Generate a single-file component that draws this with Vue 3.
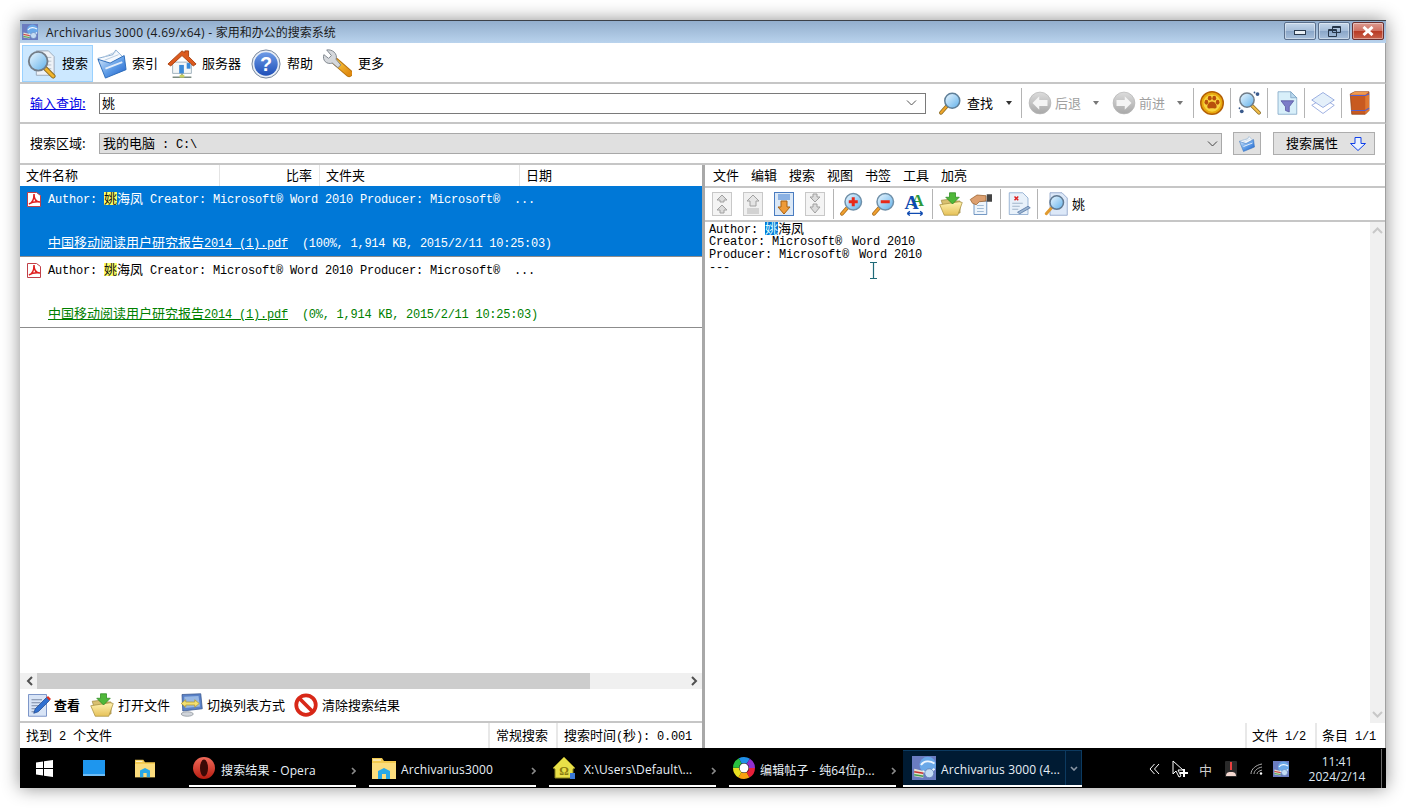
<template>
  <div class="page">
    <div class="window">
      <svg class="sprite" width="0" height="0">
        <defs>
          <linearGradient id="glass" x1="0" y1="0" x2="1" y2="1"><stop offset="0" stop-color="#eef8ff"/><stop offset="1" stop-color="#5fb0ea"/></linearGradient>
          <linearGradient id="orange" x1="0" y1="0" x2="1" y2="1"><stop offset="0" stop-color="#f8c840"/><stop offset="1" stop-color="#e08a10"/></linearGradient>
          <linearGradient id="blueF" x1="0" y1="0" x2="1" y2="1"><stop offset="0" stop-color="#e4f1fc"/><stop offset=".55" stop-color="#5b9ae6"/><stop offset="1" stop-color="#1c5cc8"/></linearGradient>
          <linearGradient id="helpB" x1="0" y1="0" x2="0" y2="1"><stop offset="0" stop-color="#6d9be6"/><stop offset="1" stop-color="#1f4fb8"/></linearGradient>
          <linearGradient id="gray" x1="0" y1="0" x2="0" y2="1"><stop offset="0" stop-color="#dcdcdc"/><stop offset="1" stop-color="#a8a8a8"/></linearGradient>
          <linearGradient id="yel" x1="0" y1="0" x2="0" y2="1"><stop offset="0" stop-color="#fff2b0"/><stop offset="1" stop-color="#e6c158"/></linearGradient>
          <linearGradient id="red" x1="0" y1="0" x2="0" y2="1"><stop offset="0" stop-color="#f06a5a"/><stop offset="1" stop-color="#b71c10"/></linearGradient>
        </defs>

        <symbol id="i-search" viewBox="0 0 32 32">
          <path d="M11 2h13l6 6v20H11z" fill="#eef2f7" stroke="#9aa7b8"/>
          <path d="M22 9h5M22 13h5M22 17h5M22 21h5" stroke="#b6c0cc"/>
          <path d="M20 20l9 9" stroke="#8a6a20" stroke-width="5" stroke-linecap="round"/>
          <path d="M21 21l8 8" stroke="#f2b52a" stroke-width="3" stroke-linecap="round"/>
          <circle cx="13" cy="13" r="10" fill="url(#glass)" stroke="#737d88" stroke-width="2"/>
        </symbol>
        <symbol id="i-folder" viewBox="0 0 32 32">
          <path d="M1 10l16-4 3-5 9 9-4 14-13 3z" fill="#f6f9fd" stroke="#7fa6cf"/>
          <path d="M6 9l14-6M8 12l15-6" stroke="#b8cce0"/>
          <path d="M1 11l8 20 22-9-2-15-15 8z" fill="url(#blueF)" stroke="#2a6ab8"/>
          <path d="M9 21l18-7" stroke="#fff" stroke-width="2" opacity=".8"/>
        </symbol>
        <symbol id="i-house" viewBox="0 0 32 32">
          <path d="M6 14h20v12H6z" fill="#f4f7f8" stroke="#9eb0bc"/>
          <path d="M1 16L16 2l3 2V2h4v6l8 8-3 2L16 7 4 18z" fill="#dc5a1e" stroke="#a8400f"/>
          <path d="M13 17h5v9h-5z" fill="#3b8ad8"/><path d="M21 15h4v6h-4z" fill="#3b8ad8"/>
          <path d="M16 26v4M6 30h20" stroke="#7a8a80" stroke-width="1.6"/>
          <rect x="13.500" y="27.500" width="5" height="3" fill="#c8d060"/>
        </symbol>
        <symbol id="i-help" viewBox="0 0 32 32">
          <circle cx="16" cy="16" r="15" fill="#e8eef6" stroke="#6f7f95"/>
          <circle cx="16" cy="16" r="12.500" fill="url(#helpB)"/>
        </symbol>
        <symbol id="i-wrench" viewBox="0 0 32 32">
          <path d="M14 13l15 13" stroke="#b87410" stroke-width="8" stroke-linecap="round"/>
          <path d="M15 14l14 12" stroke="url(#orange)" stroke-width="6" stroke-linecap="round"/>
          <path d="M5 1l5 6-3 3-5-4c-2 6 3 11 9 9l6 5 3-3-5-6c2-6-4-11-10-10z" fill="#d5d8dc" stroke="#7b828a"/>
        </symbol>
        <symbol id="i-find" viewBox="0 0 32 32">
          <path d="M12 20L4 29" stroke="#8a6a20" stroke-width="5" stroke-linecap="round"/>
          <path d="M12 20l-8 9" stroke="#eea52a" stroke-width="3" stroke-linecap="round"/>
          <circle cx="19" cy="13" r="10" fill="url(#glass)" stroke="#5f7f98" stroke-width="2"/>
        </symbol>
        <symbol id="i-back" viewBox="0 0 32 32">
          <circle cx="16" cy="16" r="14.500" fill="url(#gray)" stroke="#b5b5b5"/>
          <path d="M15 7l-9 9 9 9v-5h11v-8H15z" fill="#f4f4f4"/>
        </symbol>
        <symbol id="i-forward" viewBox="0 0 32 32">
          <circle cx="16" cy="16" r="14.500" fill="url(#gray)" stroke="#b5b5b5"/>
          <path d="M17 7l9 9-9 9v-5H6v-8h11z" fill="#f4f4f4"/>
        </symbol>
        <symbol id="i-paw" viewBox="0 0 32 32">
          <circle cx="16" cy="16" r="15" fill="#e8a90e" stroke="#b45f06" stroke-width="2"/>
          <circle cx="16" cy="16" r="11.500" fill="#f8d440"/>
          <g fill="#b8500c"><ellipse cx="8.500" cy="15" rx="2.500" ry="3.200"/><ellipse cx="13" cy="9.500" rx="2.600" ry="3.300"/><ellipse cx="19" cy="9.500" rx="2.600" ry="3.300"/><ellipse cx="23.500" cy="15" rx="2.500" ry="3.200"/><path d="M16 14c4 0 7 5 6 8-1 2-4 1-6 1s-5 1-6-1c-1-3 2-8 6-8z"/></g>
        </symbol>
        <symbol id="i-sfx" viewBox="0 0 32 32">
          <path d="M18 19l10 10" stroke="#8a6a20" stroke-width="5" stroke-linecap="round"/>
          <path d="M18 19l10 10" stroke="#f0bc4a" stroke-width="3" stroke-linecap="round"/>
          <circle cx="12" cy="12" r="9.500" fill="url(#glass)" stroke="#6f7c88" stroke-width="2"/>
          <g fill="#3a5a8c"><circle cx="26" cy="4" r="2.500"/><circle cx="22" cy="2" r="1.200"/><circle cx="5" cy="27" r="2.500"/><circle cx="2" cy="23" r="1.200"/></g>
        </symbol>
        <symbol id="i-filter" viewBox="0 0 32 32">
          <path d="M4 1h17l8 8v22H4z" fill="#d8effa" stroke="#7aa0c0"/>
          <path d="M21 1v8h8z" fill="#b9d8ee" stroke="#7aa0c0"/>
          <path d="M8 13h17l-6 8v7l-5-2v-5z" fill="#7c7cc8" stroke="#54549c"/>
        </symbol>
        <symbol id="i-layers" viewBox="0 0 32 32">
          <path d="M1 19l15-9 15 9-15 11z" fill="#fff" stroke="#8098d8"/>
          <path d="M1 12L16 2l15 10-15 10z" fill="#e4f0fa" stroke="#8098d8"/>
        </symbol>
        <symbol id="i-book" viewBox="0 0 32 32">
          <path d="M3 4l6-3h19v25l-5 5H5z" fill="#c85a20" stroke="#8c4218"/>
          <path d="M23 5h5v21l-5 5z" fill="#e07830"/>
          <path d="M3 6h20l5-2M4 26h19l5-3" stroke="#5860c8" stroke-width="1.600" fill="none"/>
          <path d="M9 1h19l-5 4H3z" fill="#f09a50"/>
        </symbol>
        <symbol id="i-pdf" viewBox="0 0 14 16">
          <path d="M.5 1.500h9l4 3v11H.5z" fill="#fff" stroke="#c04048"/>
          <path d="M2 13c3-1 5-4 5-10 0 5 2 8 6 8-5-.5-8 0-11 2z" fill="none" stroke="#e02020" stroke-width="1.500"/>
        </symbol>
        <symbol id="i-up2" viewBox="0 0 20 24">
          <rect x=".5" y=".5" width="19" height="23" fill="#f4f4f4" stroke="#c8c8c8"/>
          <path d="M10 3l5 5h-3v2H8V8H5zM10 13l5 5h-3v3H8v-3H5z" fill="#dcdcdc" stroke="#a0a0a0"/>
        </symbol>
        <symbol id="i-up1" viewBox="0 0 20 24">
          <rect x=".5" y=".5" width="19" height="23" fill="#f0f0f0" stroke="#c8c8c8"/>
          <path d="M10 3l6 6h-3v5H7V9H4z" fill="#e4e4e4" stroke="#a0a0a0"/>
          <path d="M4 17h12M4 19h12M4 21h12" stroke="#b4b4b4"/>
        </symbol>
        <symbol id="i-down1" viewBox="0 0 20 24">
          <rect x=".5" y=".5" width="19" height="23" fill="#dbe8f6" stroke="#4a7cc0"/>
          <path d="M4 3h12M4 5h12M4 7h12" stroke="#3a7ad0"/>
          <path d="M7 9h6v6h3l-6 7-6-7h3z" fill="#ee9a38" stroke="#a86010"/>
        </symbol>
        <symbol id="i-down2" viewBox="0 0 20 24">
          <rect x=".5" y=".5" width="19" height="23" fill="#f4f4f4" stroke="#c8c8c8"/>
          <path d="M8 2h4v3h3l-5 5-5-5h3zM8 12h4v3h3l-5 6-5-6h3z" fill="#dcdcdc" stroke="#a0a0a0"/>
        </symbol>
        <symbol id="i-zin" viewBox="0 0 32 32">
          <path d="M12 20L4 29" stroke="#a86a18" stroke-width="5" stroke-linecap="round"/>
          <path d="M12 20l-8 9" stroke="#f0a030" stroke-width="3" stroke-linecap="round"/>
          <circle cx="19" cy="13" r="11" fill="url(#glass)" stroke="#6f8fa8" stroke-width="2"/>
          <path d="M13 13h12M19 7v12" stroke="#e82818" stroke-width="4"/>
        </symbol>
        <symbol id="i-zout" viewBox="0 0 32 32">
          <path d="M12 20L4 29" stroke="#a86a18" stroke-width="5" stroke-linecap="round"/>
          <path d="M12 20l-8 9" stroke="#f0a030" stroke-width="3" stroke-linecap="round"/>
          <circle cx="19" cy="13" r="11" fill="url(#glass)" stroke="#6f8fa8" stroke-width="2"/>
          <path d="M13 13h12" stroke="#e82818" stroke-width="4"/>
        </symbol>
        <symbol id="i-open" viewBox="0 0 32 32">
          <path d="M3 11l9-1 3 2h13v16H8z" fill="#d8c070" stroke="#a08a40"/>
          <path d="M1 17l26-4 4 1-6 17H7z" fill="url(#yel)" stroke="#a89040"/>
          <path d="M14 1h8v6h5l-9 9-9-9h5z" fill="#50b83a" stroke="#2c8a20"/>
        </symbol>
        <symbol id="i-hand" viewBox="0 0 32 32">
          <path d="M6 12h17v18H6z" fill="#eef5fc" stroke="#4a78b0"/>
          <path d="M10 18h9M10 22h9M10 26h9" stroke="#8aa8c8"/>
          <path d="M1 10l9-6 12 1v7l-9 1-4 4-5-2z" fill="#dda070" stroke="#98602c"/>
          <path d="M23 3h7v10h-7z" fill="#444"/>
        </symbol>
        <symbol id="i-docx" viewBox="0 0 32 32">
          <path d="M3 1h18l7 7v22H3z" fill="#e8f1fa" stroke="#7fa0c8"/>
          <path d="M7 15h14M7 19h10M7 23h8" stroke="#8aa0b8"/>
          <path d="M10 6l5 5M15 6l-5 5" stroke="#e02020" stroke-width="2"/>
          <path d="M14 27l14-8 3 2-14 8z" fill="#9ab4d0" stroke="#5070a0"/>
        </symbol>
        <symbol id="i-pagefind" viewBox="0 0 32 32">
          <path d="M8 1h16l7 7v23H8z" fill="#dce8f8" stroke="#8098c0"/>
          <path d="M11 20l-8 9" stroke="#e09a30" stroke-width="4" stroke-linecap="round"/>
          <circle cx="17" cy="14" r="9" fill="url(#glass)" stroke="#607890" stroke-width="2"/>
        </symbol>
        <symbol id="i-note" viewBox="0 0 32 32">
          <path d="M2 2h24v29H2z" fill="#d8e4f6" stroke="#5a78b8"/>
          <path d="M6 9h14M6 13h12M6 17h10M6 21h8M6 25h6" stroke="#5a6a88"/>
          <path d="M9 27l2-6L26 6l4 4-15 15z" fill="#3070d0" stroke="#204a90"/>
          <path d="M26 6l4 4 2-2-4-4z" fill="#e03020"/>
        </symbol>
        <symbol id="i-switch" viewBox="0 0 32 32">
          <path d="M4 2l25-1 2 20-26 3z" fill="#5a82c8" stroke="#38568c"/>
          <path d="M7 5l19-1 2 14-20 2z" fill="#98b8e4"/>
          <path d="M3 14l6-5v3h12V9l6 5-6 5v-3H9v3z" fill="#f4e070" stroke="#b09a30"/>
          <ellipse cx="11" cy="28" rx="8" ry="3" fill="#d0d4da" stroke="#8a9098"/>
        </symbol>
        <symbol id="i-ban" viewBox="0 0 32 32">
          <circle cx="16" cy="16" r="13" fill="#fff" stroke="#d82818" stroke-width="5"/>
          <path d="M7 7l18 18" stroke="#d82818" stroke-width="5"/>
        </symbol>
        <symbol id="i-app" viewBox="0 0 32 32">
          <rect width="32" height="32" fill="#6a7cc0"/>
          <circle cx="21" cy="12" r="11" fill="#6aa8e8"/>
          <path d="M12 12c4-6 12-6 18-2M14 20c5 3 11 2 16-3" stroke="#eef6ff" stroke-width="2.500" fill="none"/>
          <path d="M3 17l12 3v9l-12-2z" fill="#e8e2d0"/><path d="M3 21l12 2" stroke="#c83030" stroke-width="2"/><path d="M3 25l12 2" stroke="#40a050" stroke-width="2"/>
          <circle cx="23" cy="23" r="6" fill="#c4dcf4" stroke="#5a78b0"/>
        </symbol>
        <symbol id="i-winfolder" viewBox="0 0 24 24">
          <path d="M0 2h10l2 3h12v18H0z" fill="#f2c94e"/>
          <path d="M0 7h24v16H0z" fill="#fbdc7c"/>
          <path d="M1 4h8" stroke="#fff"/>
          <path d="M6 15l6-3 6 3v8h-4v-5h-4v5H6z" fill="#28a8e8"/>
        </symbol>
        <symbol id="i-omega" viewBox="0 0 24 24">
          <path d="M1 12L12 1l11 11-2 1v9H3v-9z" fill="#e8e048" stroke="#8a8420"/>
          <rect x="18" y="17" width="5" height="6" fill="#3a78d8"/>
        </symbol>
        <symbol id="i-ring" viewBox="0 0 24 24">
          <circle cx="12" cy="12" r="8" fill="none" stroke="#e8203a" stroke-width="6" stroke-dasharray="8.400 42" stroke-dashoffset="0"/>
          <circle cx="12" cy="12" r="8" fill="none" stroke="#f8a010" stroke-width="6" stroke-dasharray="8.400 42" stroke-dashoffset="-8.400"/>
          <circle cx="12" cy="12" r="8" fill="none" stroke="#e8e020" stroke-width="6" stroke-dasharray="8.400 42" stroke-dashoffset="-16.800"/>
          <circle cx="12" cy="12" r="8" fill="none" stroke="#28c040" stroke-width="6" stroke-dasharray="8.400 42" stroke-dashoffset="-25.200"/>
          <circle cx="12" cy="12" r="8" fill="none" stroke="#2090e8" stroke-width="6" stroke-dasharray="8.400 42" stroke-dashoffset="-33.600"/>
          <circle cx="12" cy="12" r="8" fill="none" stroke="#9030d0" stroke-width="6" stroke-dasharray="8.400 42" stroke-dashoffset="-42"/>
          <circle cx="12" cy="12" r="4.500" fill="#fff"/>
        </symbol>
      </svg>

      <div class="titlebar">
        <svg class="title-icon"><use href="#i-app"/></svg>
        <span class="title-text"><span class="title-en">Archivarius 3000 (4.69/x64) - </span>家用和办公的搜索系统</span>
        <div class="win-btns">
          <div class="win-btn"><i class="min-glyph"></i></div>
          <div class="win-btn"><svg width="13" height="11" viewBox="0 0 13 11"><path d="M4.500 .5h8v6h-8zM.5 3.500h8v7h-8z" fill="none" stroke="#26364a"/><path d="M5 1.500h7M1 4.500h7" stroke="#26364a"/></svg></div>
          <div class="win-btn close"><svg width="14" height="10" viewBox="0 0 14 10"><path d="M2.500 1l9 8M11.500 1l-9 8" stroke="#fff" stroke-width="3"/></svg></div>
        </div>
      </div>

      <div class="maintools">
        <div v-for="t in mainTools" :key="t.label" class="main-btn" :class="{ on: t.on }">
          <svg class="ic32" viewBox="0 0 32 32">
            <use :href="'#' + t.icon"/>
            <text v-if="t.icon === 'i-help'" x="16" y="23" text-anchor="middle" font-family="Liberation Sans" font-weight="700" font-size="21" fill="#fff">?</text>
          </svg>
          <span>{{ t.label }}</span>
        </div>
      </div>

      <div class="queryrow">
        <a class="qlink">输入查询:</a>
        <div class="combo">
          <span class="combo-val">姚</span>
          <svg class="chev" width="11" height="6" viewBox="0 0 11 6"><path d="M1 .5l4.500 4.500L10 .5" fill="none" stroke="#555"/></svg>
        </div>
        <div class="tb find"><svg class="ic24"><use href="#i-find"/></svg><span>查找</span><i class="caret"></i></div>
        <i class="sep"></i>
        <div class="tb off back"><svg class="ic24"><use href="#i-back"/></svg><span>后退</span><i class="caret"></i></div>
        <div class="tb off fwd"><svg class="ic24"><use href="#i-forward"/></svg><span>前进</span><i class="caret"></i></div>
        <i class="sep s2"></i>
        <svg class="ic24 m6"><use href="#i-paw"/></svg>
        <i class="sep m6"></i>
        <svg class="ic24 m7"><use href="#i-sfx"/></svg>
        <i class="sep m5"></i>
        <svg class="ic24 m7"><use href="#i-filter"/></svg>
        <i class="sep m5"></i>
        <svg class="ic24 m6"><use href="#i-layers"/></svg>
        <i class="sep m6"></i>
        <svg class="ic24 m6"><use href="#i-book"/></svg>
      </div>

      <div class="scoperow">
        <span class="scope-label">搜索区域:</span>
        <div class="scope-select">
          <span class="scope-val">我的电脑<span class="mono-num"> : C:\</span></span>
          <svg class="chev" width="11" height="6" viewBox="0 0 11 6"><path d="M1 .5l4.500 4.500L10 .5" fill="none" stroke="#444"/></svg>
        </div>
        <div class="sq-btn"><svg width="16" height="16"><use href="#i-folder"/></svg></div>
        <div class="prop-btn">
          <span>搜索属性</span>
          <svg width="16" height="14" viewBox="0 0 16 14"><path d="M5 .5h6v6h4.500L8 13.500.5 6.500H5z" fill="#eaf2ff" stroke="#1040e8"/></svg>
        </div>
      </div>

      <div class="panes">
        <div class="left">
          <div class="cols">
            <div class="col c1">文件名称</div>
            <div class="col c2">比率</div>
            <div class="col c3">文件夹</div>
            <div class="col c4">日期</div>
          </div>
          <div class="results">
            <div v-for="r in results" :key="r.pct" class="result" :class="r.cls">
              <svg class="pdf"><use href="#i-pdf"/></svg>
              <div class="res-text">
                <div class="mono-line">{{ 'Author: ' }}<span class="hlbox hl">姚</span><span class="cj">海凤</span>{{ ' Creator: Microsoft® Word 2010 Producer: Microsoft®  ...' }}</div>
                <div class="mono-line second"><span class="res-link"><span class="cj">中国移动阅读用户研究报告</span>2014 (1).pdf</span><span class="res-meta">{{ '  (' + r.pct + ', 1,914 KB, 2015/2/11 10:25:03)' }}</span></div>
              </div>
            </div>
          </div>
          <div class="hscroll">
            <svg class="arrow" width="7" height="10" viewBox="0 0 7 10"><path d="M6 1L2 5l4 4" fill="none" stroke="#505050" stroke-width="2"/></svg>
            <div class="hthumb"></div>
            <svg class="arrow" width="7" height="10" viewBox="0 0 7 10"><path d="M1 1l4 4-4 4" fill="none" stroke="#505050" stroke-width="2"/></svg>
          </div>
          <div class="bottomtools">
            <div v-for="b in bottomTools" :key="b.label" class="bt" :class="{ strong: b.strong }">
              <svg class="ic24"><use :href="'#' + b.icon"/></svg>
              <span>{{ b.label }}</span>
            </div>
          </div>
          <div class="status">
            <div class="st-cell grow">找到<span class="mono-num">{{ ' 2 ' }}</span>个文件</div>
            <div class="st-cell w68">常规搜索</div>
            <div class="st-cell w145">搜索时间<span class="mono-num">(</span>秒<span class="mono-num">{{ '): 0.001' }}</span></div>
          </div>
        </div>

        <div class="splitter"></div>

        <div class="right">
          <div class="menubar">
            <span v-for="m in menus" :key="m">{{ m }}</span>
          </div>
          <div class="viewtools">
            <svg class="nav"><use href="#i-up2"/></svg>
            <svg class="nav"><use href="#i-up1"/></svg>
            <svg class="nav"><use href="#i-down1"/></svg>
            <svg class="nav last"><use href="#i-down2"/></svg>
            <i class="vsep first"></i>
            <svg class="vic w26"><use href="#i-zin"/></svg>
            <svg class="vic w26 mr7"><use href="#i-zout"/></svg>
            <svg class="vic mr5" viewBox="0 0 28 28">
              <text x="17" y="16" text-anchor="middle" font-family="Liberation Serif" font-weight="700" font-size="20" fill="#2e9a3c">A</text>
              <text x="10" y="20" text-anchor="middle" font-family="Liberation Serif" font-weight="700" font-size="23" fill="#0e4ab0">A</text>
              <path d="M5 25h18M5 25l3-2.500M5 25l3 2.500M23 25l-3-2.500M23 25l-3 2.500" stroke="#0e4ab0" stroke-width="1.600" fill="none"/>
            </svg>
            <i class="vsep"></i>
            <svg class="vic"><use href="#i-open"/></svg>
            <svg class="vic w25"><use href="#i-hand"/></svg>
            <i class="vsep"></i>
            <svg class="vic"><use href="#i-docx"/></svg>
            <i class="vsep"></i>
            <svg class="vic mr4"><use href="#i-pagefind"/></svg>
            <span class="vtext">姚</span>
          </div>
          <div class="docarea">
            <div class="doc">
              <div class="doc-line">{{ 'Author: ' }}<span class="hlbox dochl">姚</span><span class="cj">海凤</span></div>
              <div class="doc-line">Creator: Microsoft<span class="reg">®</span> Word 2010</div>
              <div class="doc-line">Producer: Microsoft<span class="reg">®</span> Word 2010</div>
              <div class="doc-line">---</div>
              <svg class="ibeam" width="9" height="17" viewBox="0 0 9 17"><path d="M1 .5h7M1 16.500h7M4.500 1v15" stroke="#1f6a78" stroke-width="1.200" fill="none"/></svg>
            </div>
            <div class="vscroll">
              <svg width="11" height="7" viewBox="0 0 11 7"><path d="M1 6l4.500-4.500L10 6" fill="none" stroke="#c8c8c8" stroke-width="2"/></svg>
              <svg width="11" height="7" viewBox="0 0 11 7"><path d="M1 1l4.500 4.500L10 1" fill="none" stroke="#c8c8c8" stroke-width="2"/></svg>
            </div>
          </div>
          <div class="status rstatus">
            <div class="st-cell grow"></div>
            <div class="st-cell w70">文件<span class="mono-num">{{ ' 1/2' }}</span></div>
            <div class="st-cell w70">条目<span class="mono-num">{{ ' 1/1' }}</span></div>
          </div>
        </div>
      </div>

      <div class="taskbar">
        <svg class="winlogo" width="17" height="17" viewBox="0 0 17 17"><path d="M0 2.500l7-1v6.500H0zM8 1.300L17 0v8H8zM0 9h7v6.500l-7-1zM8 9h9v8l-9-1.300z" fill="#fff"/></svg>
        <svg class="deskicon" width="22" height="16" viewBox="0 0 22 16"><rect width="22" height="16" fill="#1e96ee"/><path d="M0 15h22" stroke="#bfe4ff"/></svg>
        <svg class="explorer"><use href="#i-winfolder"/></svg>
        <div class="tasks">
          <div v-for="t in tasks" :key="t.label" class="task" :class="{ active: t.active }">
            <svg v-if="t.opera" class="task-ic" viewBox="0 0 24 24"><circle cx="12" cy="12" r="11" fill="url(#red)"/><ellipse cx="12" cy="12" rx="4" ry="8.500" fill="#3a0a06"/></svg>
            <svg v-else class="task-ic" viewBox="0 0 24 24">
              <use :href="'#' + t.icon"/>
              <text v-if="t.icon === 'i-omega'" x="12" y="19" text-anchor="middle" font-family="Liberation Serif" font-weight="700" font-size="12" fill="#8a7a10">Ω</text>
            </svg>
            <span class="task-label">{{ t.label }}</span>
            <svg class="task-more" width="5" height="8" viewBox="0 0 5 8"><path d="M1 1l3 3-3 3" fill="none" stroke="#8a8a8a" stroke-width="1.600"/></svg>
            <div v-if="t.active" class="task-drop"><svg width="8" height="5" viewBox="0 0 8 5"><path d="M1 1l3 3 3-3" fill="none" stroke="#8a96a4" stroke-width="1.600"/></svg></div>
          </div>
        </div>
        <div class="tray">
          <svg width="11" height="12" viewBox="0 0 11 12"><path d="M5.500 1L1 6l4.500 5M10 1L5.500 6l4.500 5" fill="none" stroke="#fff"/></svg>
          <svg class="t-cursor" width="17" height="18" viewBox="0 0 17 18"><path d="M1 1l10 9H6l3 6-2 1-3-6-3 3z" fill="#000" stroke="#fff"/><path d="M12 9v8M8 13h8" stroke="#fff" stroke-width="2"/></svg>
          <span class="t-zh">中</span>
          <svg class="t-usb" width="12" height="16" viewBox="0 0 12 16"><rect width="12" height="16" rx="1" fill="#2a2a2a"/><path d="M5 1h2v8H5z" fill="#e84040"/><path d="M1 15c0-4 3-4 5-4s5 0 5 4z" fill="#f4d8d0"/></svg>
          <svg class="t-wifi" width="13" height="12" viewBox="0 0 13 12"><path d="M1 11C1 6 6 2 12 1M4 11c0-3 3-6 8-7M7 11c0-2 2-3 5-4" fill="none" stroke="#aaa"/><circle cx="11" cy="10.500" r="1.200" fill="#fff"/></svg>
          <svg class="t-app" width="16" height="16"><use href="#i-app"/></svg>
        </div>
        <div class="clock"><div>11:41</div><div>2024/2/14</div></div>
        <i class="showdesk"></i>
      </div>
    </div>
  </div>
</template>

<script setup>
const mainTools = [
  { label: '搜索', icon: 'i-search', on: true },
  { label: '索引', icon: 'i-folder' },
  { label: '服务器', icon: 'i-house' },
  { label: '帮助', icon: 'i-help' },
  { label: '更多', icon: 'i-wrench' }
]

const results = [
  { pct: '100%', cls: 'selected' },
  { pct: '0%', cls: 'plain' }
]

const bottomTools = [
  { label: '查看', icon: 'i-note', strong: true },
  { label: '打开文件', icon: 'i-open' },
  { label: '切换列表方式', icon: 'i-switch' },
  { label: '清除搜索结果', icon: 'i-ban' }
]

const menus = ['文件', '编辑', '搜索', '视图', '书签', '工具', '加亮']

const tasks = [
  { label: '搜索结果 - Opera', opera: true },
  { label: 'Archivarius3000', icon: 'i-winfolder' },
  { label: 'X:\\Users\\Default\\...', icon: 'i-omega' },
  { label: '编辑帖子 - 纯64位p...', icon: 'i-ring' },
  { label: 'Archivarius 3000 (4...', icon: 'i-app', active: true }
]
</script>

<style>
html, body { margin: 0; background: #fff; }
</style>

<style scoped>
.page {
  box-sizing: border-box;
  width: 1406px;
  height: 808px;
  padding: 20px;
  font-family: "Noto Sans CJK SC", sans-serif;
  font-size: 13px;
  color: #000;
  overflow: hidden;
}
.window {
  height: 768px;
  display: flex;
  flex-direction: column;
  background: #fff;
  box-shadow: 0 0 17px rgba(0, 0, 0, .45);
}
.sprite { flex: none; }
svg { display: block; flex: none; }
i { display: block; flex: none; }

.titlebar {
  height: 23px;
  flex: none;
  box-sizing: border-box;
  border-top: 1px solid #3c4048;
  background: linear-gradient(#93aecd, #b9d3ed);
  display: flex;
  align-items: center;
  padding-left: 2px;
}
.title-icon { width: 16px; height: 16px; }
.title-text {
  margin-left: 8px;
  font-family: "Open Sans", "Noto Sans CJK SC", sans-serif;
  font-size: 12px;
  color: #1a1a1a;
}
.title-en { letter-spacing: .28px; }
.win-btns { margin-left: auto; margin-right: 2px; display: flex; gap: 2px; align-self: flex-start; margin-top: 1px; }
.win-btn {
  box-sizing: border-box;
  width: 32px;
  height: 18px;
  border: 1px solid #5a6f8c;
  border-radius: 2px;
  background: linear-gradient(#c4d6ea 0, #a4bcd8 50%, #8aa6c8 51%, #a8c0dc 100%);
  box-shadow: inset 0 0 0 1px rgba(255, 255, 255, .4);
  display: flex;
  align-items: center;
  justify-content: center;
}
.win-btn.close { border-color: #6a3030; background: linear-gradient(#dc9a90 0, #cf6f60 50%, #b83a24 51%, #c8604a 100%); }
.min-glyph { width: 10px; height: 3px; background: #e8eef4; border: 1px solid #2a3a4e; margin-top: 3px; }

.maintools, .queryrow, .scoperow { border-right: 1px solid #a0a0a0; }
.maintools {
  height: 41px;
  flex: none;
  box-sizing: border-box;
  border-bottom: 2px solid #c6c6c6;
  display: flex;
  align-items: flex-start;
  padding: 2px 0 0 2px;
}
.main-btn {
  box-sizing: border-box;
  height: 37px;
  display: flex;
  align-items: center;
  gap: 5px;
  padding: 0 3px;
  border: 1px solid transparent;
  white-space: nowrap;
}
.main-btn span { padding-bottom: 2px; }
.main-btn:nth-child(1) { width: 71px; gap: 6px; }
.main-btn:nth-child(2) { width: 69px; }
.main-btn:nth-child(3) { width: 85px; padding-left: 4px; }
.main-btn:nth-child(4) { width: 71px; gap: 6px; }
.main-btn:nth-child(5) { gap: 6px; }
.main-btn.on { background: #cce8ff; border-color: #99d1ff; }
.ic32 { width: 30px; height: 32px; }

.queryrow {
  height: 40px;
  flex: none;
  box-sizing: border-box;
  border-bottom: 2px solid #c6c6c6;
  display: flex;
  align-items: center;
  padding-left: 10px;
}
.qlink { width: 69px; color: #0000e6; text-decoration: underline; flex: none; padding-bottom: 2px; box-sizing: border-box; }
.combo {
  box-sizing: border-box;
  width: 827px;
  height: 21px;
  border: 1px solid #7a7a7a;
  display: flex;
  align-items: center;
  padding: 0 8px 0 2px;
  flex: none;
}
.combo-val { flex: 1; padding-bottom: 2px; }
.tb { display: flex; align-items: center; flex: none; }
.tb span { margin-left: 5px; padding-bottom: 2px; }
.ic24 { width: 24px; height: 24px; }
.find { margin-left: 12px; width: 83px; }
.find .caret { margin-left: 13px; border-top-color: #333; }
.off span { color: #a0a0a0; margin-left: 3px; }
.back, .fwd { width: 84px; }
.back { margin-left: 6px; }
.off .caret { margin-left: 12px; border-top-color: #777; }
.caret { width: 0; height: 0; border: 3.500px solid transparent; border-top: 4px solid #333; border-bottom: 0; }
.sep { width: 1px; height: 30px; background: #b4b4b4; }
.s2 { margin-left: -3px; }
.m5 { margin-left: 5px; }
.m6 { margin-left: 6px; }
.m7 { margin-left: 7px; }

.scoperow {
  height: 41px;
  flex: none;
  box-sizing: border-box;
  border-bottom: 2px solid #c6c6c6;
  display: flex;
  align-items: center;
  padding-left: 10px;
}
.scope-label { width: 69px; flex: none; padding-bottom: 2px; }
.scope-select {
  box-sizing: border-box;
  width: 1123px;
  height: 21px;
  flex: none;
  background: #e0e0e0;
  border: 1px solid #a8a8a8;
  display: flex;
  align-items: center;
  padding: 0 3px 0 3px;
}
.scope-val { flex: 1; white-space: pre; padding-bottom: 2px; }
.sq-btn {
  box-sizing: border-box;
  width: 28px;
  height: 23px;
  margin-left: 11px;
  flex: none;
  background: #e1e1e1;
  border: 1px solid #adadad;
  display: flex;
  align-items: center;
  justify-content: center;
}
.prop-btn {
  box-sizing: border-box;
  width: 102px;
  height: 23px;
  margin-left: 12px;
  flex: none;
  background: #e1e1e1;
  border: 1px solid #adadad;
  display: flex;
  align-items: center;
  padding-left: 12px;
  gap: 12px;
}
.prop-btn span { padding-bottom: 2px; }

.panes { flex: 1; min-height: 0; display: flex; }
.left { width: 682px; flex: none; display: flex; flex-direction: column; }
.splitter { width: 3px; flex: none; background: #a8a8a8; }
.right { flex: 1; min-width: 0; display: flex; flex-direction: column; border-right: 1px solid #a0a0a0; }

.cols { height: 21px; flex: none; display: flex; }
.col { box-sizing: border-box; line-height: 19px; border-right: 1px solid #e4e4e4; padding-left: 6px; }
.c1 { width: 200px; }
.c2 { width: 100px; text-align: right; padding-right: 7px; }
.c3 { width: 200px; }
.c4 { flex: 1; border-right: 0; }

.results { flex: 1; min-height: 0; }
.result {
  box-sizing: border-box;
  height: 71px;
  border-bottom: 1px solid #8c8c8c;
  display: flex;
  gap: 7px;
  padding: 5px 0 0 7px;
}
.selected { background: #0078d7; color: #fff; }
.plain .second { color: #008000; }
.pdf { width: 14px; height: 16px; }
.res-text { padding-top: 2px; }
.mono-line, .doc-line {
  font-family: "Liberation Mono", "Noto Sans CJK SC", monospace;
  font-size: 12px;
  letter-spacing: -.2px;
  white-space: pre;
  height: 13px;
  line-height: 13px;
}
.second { margin-top: 32px; }
.res-link { text-decoration: underline; }
.res-meta { letter-spacing: -.26px; }
.cj { font-family: "Noto Sans CJK SC", sans-serif; font-size: 13px; letter-spacing: 0; line-height: 0; }
.hlbox {
  display: inline-block;
  width: 13px;
  height: 13px;
  line-height: 11px;
  margin-top: -1px;
  font-family: "Noto Sans CJK SC", sans-serif;
  font-size: 13px;
  letter-spacing: 0;
}
.hl { background: #ffff66; color: #111; }
.dochl { background: #0078d7; color: #dff; }
.reg { display: inline-block; width: 10px; }
.mono-num { font-family: "Liberation Mono", monospace; font-size: 12px; letter-spacing: -.2px; white-space: pre; }

.hscroll {
  height: 16px;
  flex: none;
  background: #f0f0f0;
  display: flex;
  align-items: center;
  justify-content: space-between;
  padding: 0 4px 0 6px;
}
.hthumb { width: 553px; height: 16px; margin-left: 4px; margin-right: auto; background: #cdcdcd; }

.bottomtools {
  height: 34px;
  flex: none;
  box-sizing: border-box;
  border-bottom: 2px solid #c6c6c6;
  display: flex;
  align-items: center;
  padding-left: 7px;
}
.bt { display: flex; align-items: center; gap: 4px; margin-right: 9px; }
.bt span { padding-bottom: 2px; }
.strong { font-weight: 700; gap: 3px; margin-right: 10px; }

.status { height: 25px; flex: none; display: flex; }
.st-cell { box-sizing: border-box; line-height: 23px; padding-left: 6px; border-left: 2px solid #e8e8e8; white-space: pre; }
.st-cell.grow { flex: 1; border-left: 0; }
.w68 { width: 68px; }
.w145 { width: 146px; }
.w70 { width: 70px; }
.rstatus .w70 { padding-left: 5px; }

.menubar {
  height: 23px;
  flex: none;
  box-sizing: border-box;
  border-bottom: 2px solid #c6c6c6;
  display: flex;
  align-items: center;
  gap: 12px;
  padding-left: 8px;
}
.menubar span { padding-bottom: 2px; }
.viewtools {
  height: 34px;
  flex: none;
  box-sizing: border-box;
  border-bottom: 2px solid #c6c6c6;
  display: flex;
  align-items: center;
  padding-left: 7px;
}
.nav { width: 20px; height: 24px; margin-right: 11px; }
.nav.last { margin-right: 8px; }
.vic { width: 24px; height: 24px; margin-right: 6px; }
.w26 { width: 26px; }
.w25 { width: 25px; }
.mr7 { margin-right: 7px; }
.mr5 { margin-right: 5px; }
.mr4 { margin-right: 4px; }
.vsep { width: 1px; height: 30px; background: #b4b4b4; margin-right: 6px; }
.vsep.first { margin-right: 4px; }
.vtext { padding-bottom: 2px; }

.docarea { flex: 1; min-height: 0; display: flex; }
.doc { flex: 1; position: relative; padding: 1px 0 0 4px; }
.ibeam { position: absolute; left: 164px; top: 40px; }
.vscroll {
  width: 15px;
  flex: none;
  background: #f0f0f0;
  display: flex;
  flex-direction: column;
  justify-content: space-between;
  align-items: center;
  padding: 5px 0;
}

.taskbar {
  height: 40px;
  flex: none;
  background: #000;
  display: flex;
  align-items: center;
  font-family: "Open Sans", "Noto Sans CJK SC", sans-serif;
  font-size: 12px;
  color: #e8f0f8;
  position: relative;
}
.winlogo { margin-left: 16px; }
.deskicon { margin-left: 30px; }
.explorer { width: 22px; height: 20px; margin-left: 29px; }
.tasks { display: flex; margin-left: 33px; gap: 13px; align-self: stretch; }
.task {
  box-sizing: border-box;
  width: 167px;
  height: 39px;
  border-bottom: 2px solid #fff;
  display: flex;
  align-items: center;
  padding-left: 3px;
  position: relative;
  padding-top: 3px;
}
.task-ic { width: 24px; height: 24px; }
.task-label { margin-left: 5px; margin-top: 3px; white-space: nowrap; letter-spacing: .15px; }
.task:nth-child(3) .task-label { margin-left: 8px; }
.task:nth-child(4) .task-label { margin-left: 4px; }
.task-more { position: absolute; left: 162px; top: 19px; }
.task:nth-child(4) { margin-right: -6px; }
.task.active {
  width: 179px;
  margin-top: 2px;
  height: 37px;
  background: #001b33;
  padding-left: 9px;
  padding-top: 0;
  box-shadow: inset 0 1px 0 #0c3a60;
}
.active .task-more { display: none; }
.task-drop {
  position: absolute;
  right: 0;
  top: 0;
  bottom: 0;
  width: 15px;
  border: 1px solid #0c3a60;
  border-bottom: 0;
  display: flex;
  align-items: center;
  justify-content: center;
}
.tray { display: flex; align-items: center; margin-left: 67px; padding-top: 2px; }
.t-cursor { margin-left: 12px; }
.t-zh { margin-left: 10px; width: 14px; color: #ccc; font-size: 13px; font-family: "Noto Sans CJK SC", sans-serif; }
.t-usb { margin-left: 12px; }
.t-wifi { margin-left: 13px; }
.t-app { margin-left: 10px; }
.clock { margin-left: 16px; width: 64px; text-align: center; line-height: 15px; font-size: 12px; color: #dfe8f2; padding-top: 2px; }
.showdesk { position: absolute; right: 4px; top: 1px; bottom: 0; width: 1px; background: #6a6a6a; }
</style>
